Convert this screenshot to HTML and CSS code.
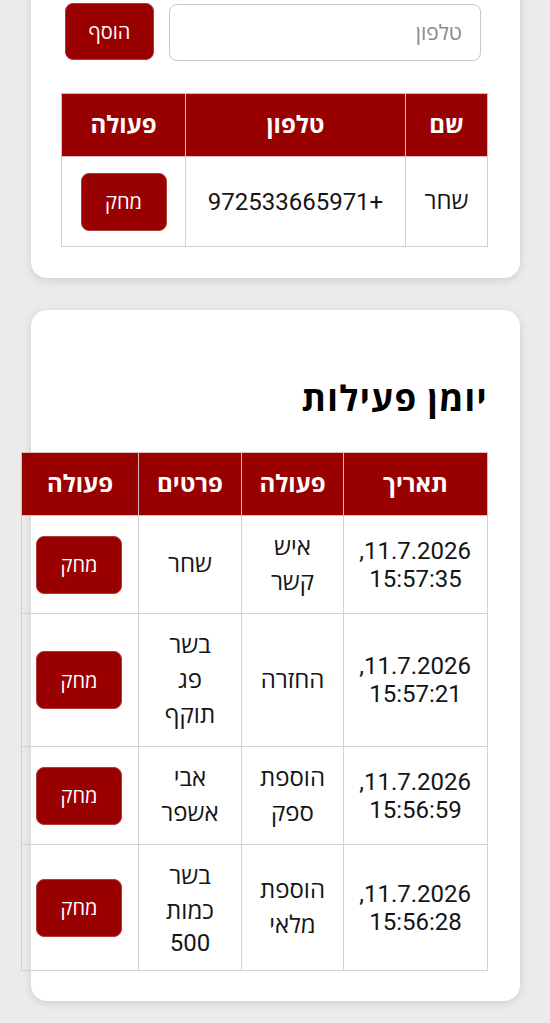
FILE: index.html
```html
<!DOCTYPE html>
<html lang="he" dir="rtl">
<head>
<meta charset="utf-8">
<title>ניהול</title>
<link rel="stylesheet" href="styles.css">
</head>
<body>
<div class="page">
  <section class="card card-top">
    <div class="add-row">
      <input class="field" type="text" placeholder="טלפון">
      <button class="btn btn-add">הוסף</button>
    </div>
    <table class="tbl tbl-contacts">
      <colgroup><col class="c-name"><col class="c-phone"><col class="c-act1"></colgroup>
      <thead>
        <tr><th>שם</th><th>טלפון</th><th>פעולה</th></tr>
      </thead>
      <tbody>
        <tr><td>שחר</td><td class="num">+972533665971</td><td><button class="btn btn-del">מחק</button></td></tr>
      </tbody>
    </table>
  </section>

  <section class="card card-log">
    <h2 class="title">יומן פעילות</h2>
    <table class="tbl tbl-log">
      <colgroup><col class="c-date"><col class="c-type"><col class="c-details"><col class="c-act2"></colgroup>
      <thead>
        <tr><th>תאריך</th><th>פעולה</th><th>פרטים</th><th>פעולה</th></tr>
      </thead>
      <tbody>
        <tr>
          <td class="num">11.7.2026, 15:57:35</td>
          <td>איש קשר</td>
          <td>שחר</td>
          <td><button class="btn btn-del">מחק</button></td>
        </tr>
        <tr>
          <td class="num">11.7.2026, 15:57:21</td>
          <td>החזרה</td>
          <td>בשר פג תוקף</td>
          <td><button class="btn btn-del">מחק</button></td>
        </tr>
        <tr>
          <td class="num">11.7.2026, 15:56:59</td>
          <td>הוספת ספק</td>
          <td>אבי אשפר</td>
          <td><button class="btn btn-del">מחק</button></td>
        </tr>
        <tr>
          <td class="num">11.7.2026, 15:56:28</td>
          <td>הוספת מלאי</td>
          <td class="num"><span class="he">בשר כמות</span> 500</td>
          <td><button class="btn btn-del">מחק</button></td>
        </tr>
      </tbody>
    </table>
  </section>
</div>
</body>
</html>
```

FILE: styles.css
```css
* { box-sizing: border-box; }

html, body {
  margin: 0;
  padding: 0;
  background: #ebebeb;
}

body {
  font-family: Roboto, "Open Sans", "Liberation Sans", sans-serif;
  font-size: 24px;
  color: #111;
}

.page {
  padding: 0 30px 24px 31px;
}

.card {
  background: #fff;
  border-radius: 16px;
  box-shadow: 0 2px 9px rgba(0, 0, 0, 0.13);
  padding: 31px 32px 32px 31px;
  margin-bottom: 32px;
}

.card-top {
  margin-top: -27px;
  padding-bottom: 31px;
}

.card-log {
  padding-bottom: 30px;
  margin-bottom: 0;
}

.add-row {
  display: flex;
  gap: 15px;
  padding: 0 7px 0 3px;
  margin-bottom: 32px;
  align-items: flex-start;
}

.field {
  flex: 1 1 auto;
  min-width: 0;
  width: 0;
  height: 57px;
  border: 1px solid #c8c8c8;
  border-radius: 8px;
  padding: 0 18px;
  font-family: inherit;
  font-size: 21px;
  color: #222;
  background: #fff;
  direction: rtl;
}

.field::placeholder {
  color: #8a8a8a;
}

.btn {
  background: #990000;
  color: #fff;
  border: 1px solid #b13a3a;
  border-radius: 8px;
  font-family: inherit;
  font-size: 20px;
  cursor: pointer;
}

.btn-add {
  flex: 0 0 89px;
  width: 89px;
  height: 57px;
  margin-top: -1px;
}

.btn-del {
  width: 86px;
  height: 58px;
  vertical-align: middle;
}

.title {
  font-size: 35px;
  font-weight: 700;
  letter-spacing: 1.3px;
  line-height: 40px;
  margin: 39px 0 32px;
  color: #000;
}

.tbl {
  border-collapse: collapse;
  table-layout: fixed;
}

.tbl-contacts { width: 426px; }
.tbl-log { width: 466px; }

.c-name { width: 82px; }
.c-phone { width: 220px; }
.c-act1 { width: 124px; }

.c-date { width: 144px; }
.c-type { width: 102px; }
.c-details { width: 103px; }
.c-act2 { width: 117px; }

.tbl th,
.tbl td {
  padding: 13.5px 16px;
  text-align: center;
  line-height: 35px;
}

.tbl th {
  background: #990000;
  color: #fff;
  font-weight: 700;
  border: 1px solid #dcbcbc;
}

.tbl td {
  border: 1px solid #d2d2d2;
  color: #151515;
}

.tbl-contacts td {
  padding-top: 15.5px;
  padding-bottom: 15.5px;
}

.tbl td.num {
  line-height: 28px;
}

.he {
  line-height: 35px;
}
```
